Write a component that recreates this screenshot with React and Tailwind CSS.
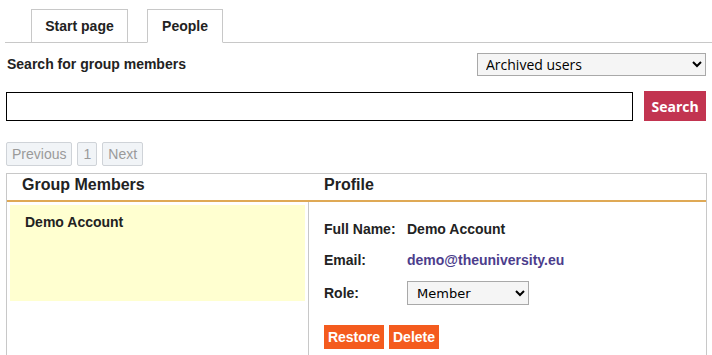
import React from "react";

export default function App() {
  return (
    <div className="w-[712px] h-[355px] overflow-hidden bg-white text-[#222] font-['Liberation_Sans',Arial,sans-serif]">
      {/* Tabs */}
      <div className="flex items-end h-[43px] ml-[5px] border-b border-[#c8c8c8]">
        <div className="ml-[26px] w-[97px] h-[34px] -mb-px border border-[#c8c8c8] bg-white flex items-center justify-center text-[14px] font-bold">
          Start page
        </div>
        <div className="ml-[19px] w-[76px] h-[34px] -mb-px border border-[#c8c8c8] border-b-white bg-white flex items-center justify-center text-[14px] font-bold">
          People
        </div>
      </div>

      {/* Search heading + filter */}
      <div className="flex items-start justify-between pl-[7px] pr-[6px] pt-[10px]">
        <div className="text-[14px] font-bold leading-[16px] mt-[3px]">Search for group members</div>
        <select className="w-[229px] h-[23px] border border-[#a9a9a9] bg-[#f5f5f5] text-[14px] text-black pl-[4px] font-['Open_Sans',sans-serif]">
          <option>Archived users</option>
        </select>
      </div>

      {/* Search bar */}
      <div className="flex items-center pl-[6px] pr-[6px] mt-[15px]">
        <input className="w-[628px] h-[29px] border border-black bg-white outline-none" />
        <button className="ml-[11px] w-[62px] h-[30px] bg-[#c23450] text-white text-[14px] font-bold font-['Open_Sans',sans-serif]">
          Search
        </button>
      </div>

      {/* Pagination */}
      <div className="flex gap-[5px] pl-[6px] mt-[21px]">
        <span className="h-[24px] px-[5px] flex items-center border border-[#cfd3d8] rounded-[2px] bg-[#f1f4f7] text-[#9a9a9a] text-[14px]">Previous</span>
        <span className="h-[24px] px-[5px] flex items-center border border-[#cfd3d8] rounded-[2px] bg-[#f1f4f7] text-[#9a9a9a] text-[14px]">1</span>
        <span className="h-[24px] px-[5px] flex items-center border border-[#cfd3d8] rounded-[2px] bg-[#f1f4f7] text-[#9a9a9a] text-[14px]">Next</span>
      </div>

      {/* Members / Profile */}
      <div className="ml-[6px] mt-[7px] w-[701px] border border-b-0 border-[#c8c8c8] h-[190px]">
        <div className="flex h-[28px] border-b-2 border-[#dfa955]">
          <div className="w-[302px] pl-[15px] flex items-end pb-[3px] text-[16px] font-bold">Group Members</div>
          <div className="pl-[15px] flex items-end pb-[3px] text-[16px] font-bold">Profile</div>
        </div>
        <div className="flex h-full">
          <div className="w-[302px] border-r border-[#c8c8c8] pt-[3px] pl-[3px] pr-[3px]">
            <div className="h-[96px] bg-[#ffffd0] pl-[15px] pt-[7px] text-[14px] font-bold">Demo Account</div>
          </div>
          <div className="pl-[15px] pt-[19px] text-[14px] font-bold">
            <div className="flex h-[16px] items-center">
              <span className="w-[83px]">Full Name:</span>
              <span>Demo Account</span>
            </div>
            <div className="flex h-[16px] items-center mt-[15px]">
              <span className="w-[83px]">Email:</span>
              <span className="text-[#4c3d8c]">demo@theuniversity.eu</span>
            </div>
            <div className="flex items-center mt-[13px]">
              <span className="w-[83px]">Role:</span>
              <select className="w-[122px] h-[24px] border border-[#a9a9a9] bg-[#f5f5f5] text-[13px] font-normal text-black pl-[5px] font-['DejaVu_Sans',sans-serif]">
                <option>Member</option>
              </select>
            </div>
            <div className="flex gap-[5px] mt-[20px]">
              <button className="w-[60px] h-[24px] bg-[#f45b1e] text-white text-[14px] font-bold">Restore</button>
              <button className="w-[50px] h-[24px] bg-[#f45b1e] text-white text-[14px] font-bold">Delete</button>
            </div>
          </div>
        </div>
      </div>
    </div>
  );
}
